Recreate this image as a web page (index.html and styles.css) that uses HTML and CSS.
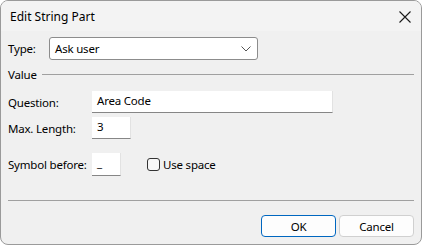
FILE: index.html
```html
<!DOCTYPE html>
<html>
    <head>
        <title>Edit String Part</title>
        <link rel="stylesheet" href="styles.css">
    </head>
    <body>
        <div class="window">
            <div class="titlebar">
                <span class="title">Edit String Part</span>
                <svg class="close" width="12" height="12" viewBox="0 0 12 12">
                    <path d="M0.5 0.5 L11.5 11.5 M11.5 0.5 L0.5 11.5" stroke="#1a1a1a" stroke-width="1.1" fill="none"/>
                </svg>
            </div>
            <div class="content">
                <div class="row type-row">
                    <span class="type-label">Type:</span>
                    <div class="combo">
                        <span>Ask user</span>
                        <svg width="10" height="6" viewBox="0 0 10 6">
                            <path d="M0.5 0.5 L5 5 L9.5 0.5" stroke="#555" stroke-width="1" fill="none"/>
                        </svg>
                    </div>
                </div>

                <div class="group-head">
                    <span>Value</span>
                    <div class="group-line"></div>
                </div>

                <div class="row field-row question-row">
                    <span class="field-label">Question:</span>
                    <div class="edit edit-question">Area Code</div>
                </div>
                <div class="row field-row">
                    <span class="field-label">Max. Length:</span>
                    <div class="edit edit-max">3</div>
                </div>
                <div class="row field-row symbol-row">
                    <span class="field-label">Symbol before:</span>
                    <div class="edit edit-symbol">_</div>
                    <span class="checkbox"></span>
                    <span class="check-label">Use space</span>
                </div>

                <div class="separator"></div>

                <div class="buttons">
                    <button class="btn default">OK</button>
                    <button class="btn">Cancel</button>
                </div>
            </div>
        </div>
    </body>
</html>
```
FILE: styles.css
```css
body {
    margin: 0;
    background: #ffffff;
    font-family: "Noto Sans", sans-serif;
    font-size: 12px;
    color: #000;
}

.window {
    width: 422px;
    height: 245px;
    box-sizing: border-box;
    border: 1px solid #9a9a9a;
    border-radius: 8px;
    overflow: hidden;
    background: #f0f0f0;
    display: flex;
    flex-direction: column;
}

.titlebar {
    height: 30px;
    flex-shrink: 0;
    background: #f3f3f3;
    display: flex;
    align-items: center;
    justify-content: space-between;
    padding: 0 10px 0 9px;
}

.close {
    margin-top: 1px;
}

.content {
    padding: 6px 7px 0 7px;
    font-size: 11.5px;
    letter-spacing: -0.2px;
}

.row {
    display: flex;
    align-items: center;
    white-space: nowrap;
}

.row > * {
    flex-shrink: 0;
}

.type-label {
    width: 41px;
}

.combo {
    width: 209px;
    height: 23px;
    box-sizing: border-box;
    background: #fff;
    border: 1px solid #8c8c8c;
    border-radius: 3px;
    display: flex;
    align-items: center;
    justify-content: space-between;
    padding: 0 6px 0 5px;
}

.group-head {
    display: flex;
    align-items: center;
    margin-top: 6px;
    height: 16px;
}

.group-line {
    flex: 1;
    height: 1px;
    background: #a0a0a0;
    margin-left: 5px;
    margin-top: 1px;
}

.field-row {
    height: 22px;
    margin-top: 4px;
}

.question-row {
    margin-top: 9px;
}

.field-label {
    width: 84px;
}

.edit {
    height: 22px;
    box-sizing: border-box;
    background: #fff;
    border-bottom: 1px solid #868686;
    border-right: 1px solid #e2e2e2;
    padding: 2px 5px 0 5px;
}

.edit-question {
    width: 241px;
}

.edit-max {
    width: 39px;
}

.symbol-row {
    margin-top: 14px;
    height: 23px;
}

.edit-symbol {
    width: 29px;
    height: 23px;
}

.checkbox {
    width: 13px;
    height: 13px;
    box-sizing: border-box;
    border: 1px solid #333;
    border-radius: 3px;
    background: #f7f7f7;
    margin-left: 26px;
}

.check-label {
    margin-left: 3px;
}

.separator {
    height: 1px;
    background: #a0a0a0;
    margin-top: 24px;
}

.buttons {
    display: flex;
    justify-content: flex-end;
    gap: 3px;
    margin-top: 14px;
}

.btn {
    width: 75px;
    height: 22px;
    font-family: inherit;
    font-size: inherit;
    letter-spacing: inherit;
    background: #fdfdfd;
    border: 1px solid #d0d0d0;
    border-radius: 4px;
    padding: 0;
    color: #000;
}

.btn.default {
    border-color: #0067c0;
}
```
